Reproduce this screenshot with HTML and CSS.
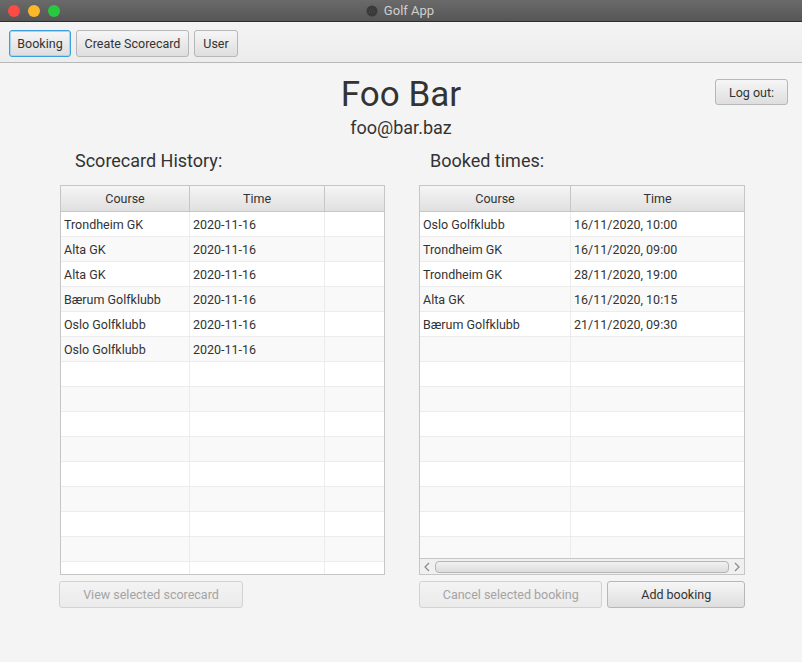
FILE: index.html
```html
<!DOCTYPE html>
<html>
<head>
<meta charset="utf-8">
<link rel="stylesheet" href="styles.css">
</head>
<body>
<div class="window">
  <div class="titlebar">
    <div class="lights">
      <span class="light red"></span>
      <span class="light yellow"></span>
      <span class="light green"></span>
    </div>
    <div class="title">
      <svg class="app-icon" width="12" height="12" viewBox="0 0 12 12"><circle cx="6" cy="6" r="5.5" fill="#3a3a3a"/><circle cx="4.5" cy="4.5" r="0.6" fill="#555"/><circle cx="7" cy="4" r="0.6" fill="#555"/><circle cx="5.5" cy="7" r="0.6" fill="#555"/><circle cx="8" cy="6.5" r="0.6" fill="#555"/><circle cx="3.5" cy="7" r="0.6" fill="#555"/></svg>
      <span>Golf App</span>
    </div>
  </div>
  <div class="toolbar">
    <button class="btn focused tab-booking">Booking</button>
    <button class="btn tab-create">Create Scorecard</button>
    <button class="btn tab-user">User</button>
  </div>
  <div class="main">
    <div class="header">
      <div></div>
      <div class="identity">
        <div class="name">Foo Bar</div>
        <div class="email">foo@bar.baz</div>
      </div>
      <div class="logout-wrap"><button class="btn logout">Log out:</button></div>
    </div>
    <div class="panels">
      <div class="panel">
        <div class="panel-title">Scorecard History:</div>
        <div class="table left-table">
          <div class="thead"><div>Course</div><div>Time</div><div></div></div>
          <div class="tbody">
            <div class="tr"><div>Trondheim GK</div><div>2020-11-16</div><div></div></div>
            <div class="tr"><div>Alta GK</div><div>2020-11-16</div><div></div></div>
            <div class="tr"><div>Alta GK</div><div>2020-11-16</div><div></div></div>
            <div class="tr"><div>Bærum Golfklubb</div><div>2020-11-16</div><div></div></div>
            <div class="tr"><div>Oslo Golfklubb</div><div>2020-11-16</div><div></div></div>
            <div class="tr"><div>Oslo Golfklubb</div><div>2020-11-16</div><div></div></div>
            <div class="tr"><div></div><div></div><div></div></div>
            <div class="tr"><div></div><div></div><div></div></div>
            <div class="tr"><div></div><div></div><div></div></div>
            <div class="tr"><div></div><div></div><div></div></div>
            <div class="tr"><div></div><div></div><div></div></div>
            <div class="tr"><div></div><div></div><div></div></div>
            <div class="tr"><div></div><div></div><div></div></div>
            <div class="tr"><div></div><div></div><div></div></div>
            <div class="tr"><div></div><div></div><div></div></div>
          </div>
        </div>
        <div class="actions">
          <button class="btn disabled wide">View selected scorecard</button>
        </div>
      </div>
      <div class="panel">
        <div class="panel-title">Booked times:</div>
        <div class="table right-table">
          <div class="thead"><div>Course</div><div>Time</div></div>
          <div class="tbody">
            <div class="tr"><div>Oslo Golfklubb</div><div>16/11/2020, 10:00</div></div>
            <div class="tr"><div>Trondheim GK</div><div>16/11/2020, 09:00</div></div>
            <div class="tr"><div>Trondheim GK</div><div>28/11/2020, 19:00</div></div>
            <div class="tr"><div>Alta GK</div><div>16/11/2020, 10:15</div></div>
            <div class="tr"><div>Bærum Golfklubb</div><div>21/11/2020, 09:30</div></div>
            <div class="tr"><div></div><div></div></div>
            <div class="tr"><div></div><div></div></div>
            <div class="tr"><div></div><div></div></div>
            <div class="tr"><div></div><div></div></div>
            <div class="tr"><div></div><div></div></div>
            <div class="tr"><div></div><div></div></div>
            <div class="tr"><div></div><div></div></div>
            <div class="tr"><div></div><div></div></div>
            <div class="tr"><div></div><div></div></div>
          </div>
          <div class="hscroll">
            <svg class="arrow" width="8" height="10" viewBox="0 0 8 10"><path d="M6 1 L2 5 L6 9" fill="none" stroke="#8a8a8a" stroke-width="1.2"/></svg>
            <div class="thumb"></div>
            <svg class="arrow" width="8" height="10" viewBox="0 0 8 10"><path d="M2 1 L6 5 L2 9" fill="none" stroke="#8a8a8a" stroke-width="1.2"/></svg>
          </div>
        </div>
        <div class="actions">
          <button class="btn disabled wide">Cancel selected booking</button>
          <button class="btn add">Add booking</button>
        </div>
      </div>
    </div>
  </div>
</div>
</body>
</html>
```

FILE: styles.css
```css
* { box-sizing: border-box; }
html, body {
  margin: 0;
  padding: 0;
  width: 802px;
  height: 662px;
  overflow: hidden;
  font-family: Roboto, "Liberation Sans", sans-serif;
  color: #333;
}
.window {
  width: 802px;
  height: 662px;
  background: #f4f4f4;
  display: flex;
  flex-direction: column;
}
.titlebar {
  height: 22px;
  background: linear-gradient(#6a6a6a, #565656);
  border-bottom: 1px solid #2e2e2e;
  display: flex;
  align-items: center;
  position: relative;
}
.lights {
  display: flex;
  gap: 8px;
  padding-left: 8px;
}
.light {
  width: 12px;
  height: 12px;
  border-radius: 50%;
}
.red { background: #fc4b45; }
.yellow { background: #fdb82a; }
.green { background: #27c93f; }
.title {
  position: absolute;
  left: 0;
  right: 0;
  top: 0;
  height: 21px;
  display: flex;
  justify-content: center;
  align-items: center;
  gap: 6px;
  color: #cfcfcf;
  font-size: 13px;
  padding-right: 2px;
}
.toolbar {
  height: 41px;
  background: linear-gradient(#f4f4f4, #ececec);
  border-bottom: 1px solid #b8b8b8;
  display: flex;
  align-items: center;
  gap: 5px;
  padding: 2px 0 0 9px;
}
.btn {
  font-family: Roboto, "Liberation Sans", sans-serif;
  font-size: 12.5px;
  color: #333;
  height: 27px;
  padding: 0;
  border: 1px solid #b7b7b7;
  border-radius: 3px;
  background: linear-gradient(#f6f6f6, #dedede);
}
.tab-booking { width: 62px; }
.tab-create { width: 113px; }
.tab-user { width: 44px; }
.btn.focused {
  border: 1px solid #3ba0dd;
  box-shadow: inset 0 0 0 1px #a6d4f2;
}
.main {
  flex: 1;
  display: flex;
  flex-direction: column;
}
.header {
  display: grid;
  grid-template-columns: 1fr auto 1fr;
  padding-top: 12px;
}
.identity {
  display: flex;
  flex-direction: column;
  align-items: center;
}
.name {
  font-size: 35px;
  line-height: 40px;
  color: #333;
}
.email {
  font-size: 18px;
  line-height: 22px;
  margin-top: 2px;
}
.logout-wrap {
  justify-self: end;
  padding: 4px 14px 0 0;
}
.logout {
  width: 73px;
  height: 26px;
}
.panels {
  display: grid;
  grid-template-columns: 325px 326px;
  column-gap: 34px;
  padding-left: 60px;
  margin-top: 10px;
}
.panel {
  display: flex;
  flex-direction: column;
}
.panel-title {
  font-size: 18px;
  line-height: 24px;
  padding-left: 15px;
  height: 36px;
}
.panel:last-child .panel-title { padding-left: 11px; }
.table {
  height: 390px;
  border: 1px solid #c6c6c6;
  background: #fff;
  display: flex;
  flex-direction: column;
  overflow: hidden;
  font-size: 12.5px;
}
.thead {
  display: grid;
  height: 26px;
  flex: none;
  background: linear-gradient(#f5f5f5, #e0e0e0);
  border-bottom: 1px solid #c6c6c6;
}
.thead > div {
  display: flex;
  align-items: center;
  justify-content: center;
  border-right: 1px solid #c6c6c6;
}
.thead > div:last-child { border-right: none; }
.tbody { flex: 1; overflow: hidden; }
.tr {
  display: grid;
  height: 25px;
  border-bottom: 1px solid #ececec;
}
.tr:nth-child(even) { background: #f9f9f9; }
.tr > div {
  display: flex;
  align-items: center;
  padding-left: 3px;
  border-right: 1px solid #ececec;
  white-space: nowrap;
}
.tr > div:last-child { border-right: none; }
.left-table .thead, .left-table .tr { grid-template-columns: 129px 135px 1fr; }
.right-table .thead, .right-table .tr { grid-template-columns: 151px 1fr; }
.hscroll {
  flex: none;
  height: 16px;
  border-top: 1px solid #c6c6c6;
  background: #f0f0f0;
  display: flex;
  align-items: center;
  gap: 4px;
  padding: 0 3px;
}
.arrow { flex: none; }
.thumb {
  flex: 1;
  height: 12px;
  border: 1px solid #b4b4b4;
  border-radius: 4px;
  background: linear-gradient(#f2f2f2, #dcdcdc);
}
.actions {
  display: flex;
  gap: 5px;
  margin-top: 6px;
}
.btn.wide {
  width: 184px;
  height: 27px;
}
.btn.disabled {
  color: #a4a4a4;
  border-color: #d2d2d2;
  background: linear-gradient(#f3f3f3, #ebebeb);
}
.panel:first-child .btn.wide { margin-left: -1px; }
.btn.add {
  width: 138px;
  height: 27px;
}
```
